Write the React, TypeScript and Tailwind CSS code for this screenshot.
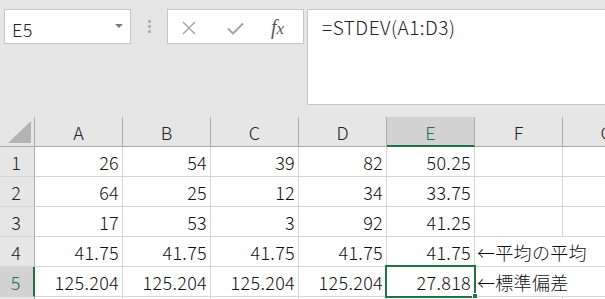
import React from "react";

const FONT = { fontFamily: '"Noto Sans CJK JP", "Noto Sans", sans-serif' };

const cols = ["A", "B", "C", "D", "E", "F", "G"];
const data: string[][] = [
  ["26", "54", "39", "82", "50.25", "", ""],
  ["64", "25", "12", "34", "33.75", "", ""],
  ["17", "53", "3", "92", "41.25", "", ""],
  ["41.75", "41.75", "41.75", "41.75", "41.75", "←平均の平均", ""],
  ["125.204", "125.204", "125.204", "125.204", "27.818", "←標準偏差", ""],
  ["", "", "", "", "", "", ""],
];

function Dots() {
  return (
    <div className="flex flex-col gap-[2px] mt-[11px] ml-[17px] mr-[16px]">
      <div className="w-[3px] h-[3px] bg-[#b3b3b3]" />
      <div className="w-[3px] h-[3px] bg-[#b3b3b3]" />
      <div className="w-[3px] h-[3px] bg-[#b3b3b3]" />
    </div>
  );
}

export default function App() {
  return (
    <div className="w-[605px] h-[299px] overflow-hidden bg-[#e6e6e6] text-[#222] font-light" style={FONT}>
      {/* Formula bar area */}
      <div className="h-[117px] flex items-start pt-[9px] pl-[4px]">
        <div className="w-[127px] h-[35px] bg-white border border-[#c6c6c6] flex items-center justify-between pl-[7px] pr-[7px]">
          <span className="text-[18px] leading-none mt-[4px] text-[#222] tracking-[0.5px]">E5</span>
          <svg width="8" height="4" viewBox="0 0 8 4" className="mt-[-2px]">
            <path d="M0 0 L8 0 L4 4 Z" fill="#7a7a7a" />
          </svg>
        </div>
        <Dots />
        <div className="w-[137px] h-[35px] bg-white border border-[#c6c6c6] flex items-center">
          <svg width="14" height="14" viewBox="0 0 14 14" className="ml-[14px] mt-[2px]">
            <path d="M1 1 L13 13 M13 1 L1 13" stroke="#a6a6a6" strokeWidth="1.4" fill="none" />
          </svg>
          <svg width="17" height="13" viewBox="0 0 17 13" className="ml-[31px] mt-[3px]">
            <path d="M1 6.5 L6 11.5 L16 1.5" stroke="#a6a6a6" strokeWidth="2" fill="none" />
          </svg>
          <span
            className="ml-[27px] text-[20px] italic text-[#595959] leading-none font-normal"
            style={{ fontFamily: '"Liberation Serif", "DejaVu Serif", serif' }}
          >
            <span>f</span>
            <span className="text-[17px]">x</span>
          </span>
        </div>
        <div className="ml-[3px] flex-1 h-[96px] bg-white border border-[#c6c6c6] border-r-0 pl-[14px] pt-[5px]">
          <span className="text-[19px] text-[#222] leading-[24px] tracking-[0.5px]">=STDEV(A1:D3)</span>
        </div>
      </div>

      {/* Grid */}
      <div className="grid grid-cols-[35px_88px_88px_88px_88px_88px_88px_88px] bg-white w-[651px]">
        {/* corner */}
        <div className="h-[30px] bg-[#e6e6e6] border-r border-b border-[#ababab] relative">
          <svg width="24" height="23" viewBox="0 0 24 23" className="absolute left-[8px] top-[4px]">
            <path d="M23 0 L23 22 L0 22 Z" fill="#b3b3b3" />
          </svg>
        </div>
        {cols.map((c) => {
          const sel = c === "E";
          return (
            <div
              key={c}
              className={
                sel
                  ? "h-[30px] bg-[#d2d2d2] border-r border-[#ababab] border-b-2 border-b-[#217346] flex items-center justify-center text-[18px] text-[#217346]"
                  : "h-[30px] bg-[#e6e6e6] border-r border-b border-[#ababab] flex items-center justify-center text-[18px] text-[#222]"
              }
            >
              <span className="leading-none mt-[1px]">{c}</span>
            </div>
          );
        })}
        {data.map((row, ri) => {
          const rn = ri + 1;
          const selRow = rn === 5;
          return (
            <React.Fragment key={ri}>
              <div
                className={
                  selRow
                    ? "h-[30px] bg-[#d2d2d2] border-r-2 border-r-[#217346] border-b border-b-[#d4d4d4] flex items-center justify-center text-[18px] text-[#217346]"
                    : "h-[30px] bg-[#e6e6e6] border-r border-r-[#ababab] border-b border-b-[#d4d4d4] flex items-center justify-center text-[18px] text-[#222]"
                }
              >
                {rn <= 5 && <span className="leading-none mt-[1px] -ml-[2px]">{rn}</span>}
              </div>
              {row.map((v, ci) => {
                const isNote = ci === 5 && v !== "";
                const isE5 = selRow && ci === 4;
                const hideRight = (ci === 5 || ci === 6) && (rn === 4 || rn === 5);
                return (
                  <div
                    key={ci}
                    className={
                      "h-[30px] border-b border-[#d4d4d4] relative flex items-center text-[18px] text-[#111] " +
                      (hideRight ? "" : "border-r ") +
                      (isNote ? "justify-start pl-[2px]" : "justify-end pr-[3px]")
                    }
                  >
                    {v !== "" && (
                      <span className="relative z-[1] leading-none mt-[1px] whitespace-nowrap tracking-[0.3px]">{v}</span>
                    )}
                    {isE5 && (
                      <>
                        <div className="absolute -left-[2px] -top-[2px] w-[91px] h-[33px] border-2 border-[#217346] z-10" />
                        <div className="absolute left-[85px] top-[26px] w-[6px] h-[6px] bg-[#217346] border border-white z-20" />
                      </>
                    )}
                  </div>
                );
              })}
            </React.Fragment>
          );
        })}
      </div>
    </div>
  );
}
